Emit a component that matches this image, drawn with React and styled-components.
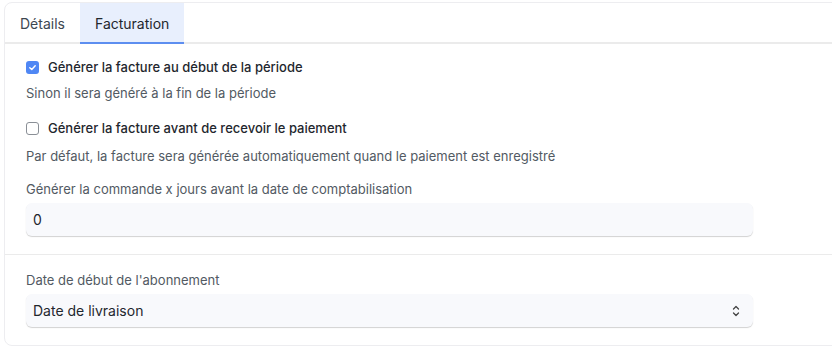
import React, { useState } from "react";
import styled, { createGlobalStyle } from "styled-components";

const GlobalStyle = createGlobalStyle`
  html, body {
    margin: 0;
    padding: 0;
    background: #ffffff;
    overflow: hidden;
  }
  body {
    font-family: Inter, "Noto Sans", sans-serif;
    color: #1f272e;
  }
`;

const Check = () => (
  <svg width="9" height="9" viewBox="0 0 10 10">
    <path d="M2 5.2 L4.2 7.2 L8 3" fill="none" stroke="#fff" strokeWidth="1.6" strokeLinecap="round" strokeLinejoin="round" />
  </svg>
);

const App = () => {
  const [active, setActive] = useState("facturation");
  const [startOfPeriod, setStartOfPeriod] = useState(true);
  const [beforePayment, setBeforePayment] = useState(false);

  return (
    <>
      <GlobalStyle />
      <Page>
        <Card>
          <TabBar>
            <Tab active={active === "details"} onClick={() => setActive("details")}>
              Détails
            </Tab>
            <Tab active={active === "facturation"} onClick={() => setActive("facturation")}>
              Facturation
            </Tab>
          </TabBar>

          <Section>
            <Column>
              <CheckRow>
                <CheckBox checked={startOfPeriod} onClick={() => setStartOfPeriod(!startOfPeriod)}>
                  {startOfPeriod && <Check />}
                </CheckBox>
                <CheckLabel>Générer la facture au début de la période</CheckLabel>
              </CheckRow>
              <Help>Sinon il sera généré à la fin de la période</Help>

              <CheckRow second>
                <CheckBox checked={beforePayment} onClick={() => setBeforePayment(!beforePayment)}>
                  {beforePayment && <Check />}
                </CheckBox>
                <CheckLabel>Générer la facture avant de recevoir le paiement</CheckLabel>
              </CheckRow>
              <Help wide>Par défaut, la facture sera générée automatiquement quand le paiement est enregistré</Help>

              <Field>
                <FieldLabel>Générer la commande x jours avant la date de comptabilisation</FieldLabel>
                <Input defaultValue="0" />
              </Field>
            </Column>
          </Section>

          <Section last>
            <Column>
              <Field top>
                <FieldLabel>Date de début de l'abonnement</FieldLabel>
                <SelectBox>
                  <span>Date de livraison</span>
                  <svg width="10" height="14" viewBox="0 0 10 14">
                    <path d="M2.5 5 L5 2.5 L7.5 5 M2.5 9 L5 11.5 L7.5 9" fill="none" stroke="#444" strokeWidth="1.3" strokeLinecap="round" strokeLinejoin="round" />
                  </svg>
                </SelectBox>
              </Field>
            </Column>
          </Section>
        </Card>
      </Page>
    </>
  );
};

export default App;

const Page = styled.div`
  padding: 2px 0 0 4px;
  width: 900px;
`;

const Card = styled.div`
  border: 1px solid #ededf0;
  border-radius: 8px;
  background: #fff;
  height: 344px;
  box-sizing: border-box;
`;

const TabBar = styled.div`
  display: flex;
  height: 39px;
  border-bottom: 2px solid #ebebeb;
`;

const Tab = styled.div`
  display: flex;
  align-items: center;
  padding: 0 15px;
  font-size: 14px;
  color: ${(p) => (p.active ? "#1f272e" : "#3d4751")};
  background: ${(p) => (p.active ? "#e8effd" : "transparent")};
  box-shadow: ${(p) => (p.active ? "inset 0 -2px 0 #5d8ef0" : "none")};
  margin-bottom: -2px;
  cursor: pointer;
  &:first-child {
    border-top-left-radius: 8px;
  }
`;

const Section = styled.div`
  padding: ${(p) => (p.last ? "17px 0 0 21px" : "15px 0 18px 21px")};
  border-bottom: ${(p) => (p.last ? "none" : "1px solid #ebebeb")};
`;

const Column = styled.div`
  width: 727px;
  display: flex;
  flex-direction: column;
`;

const CheckRow = styled.div`
  display: flex;
  align-items: center;
  gap: 9px;
  height: 16px;
  margin-top: ${(p) => (p.second ? "19px" : "0")};
`;

const CheckBox = styled.div`
  width: 13px;
  height: 13px;
  box-sizing: border-box;
  border-radius: 3px;
  display: flex;
  align-items: center;
  justify-content: center;
  background: ${(p) => (p.checked ? "#4f87f4" : "#fff")};
  border: ${(p) => (p.checked ? "none" : "1px solid #8a8f96")};
  cursor: pointer;
  flex-shrink: 0;
`;

const CheckLabel = styled.span`
  font-size: 13px;
  font-weight: 500;
  color: #1f272e;
`;

const Help = styled.div`
  font-size: 13px;
  color: #525a63;
  margin-top: ${(p) => (p.wide ? "12px" : "10px")};
  line-height: 16px;
`;

const Field = styled.div`
  display: flex;
  flex-direction: column;
  margin-top: ${(p) => (p.top ? "0" : "17px")};
`;

const FieldLabel = styled.label`
  font-size: 13px;
  color: #525a63;
  line-height: 16px;
  margin-bottom: 6px;
`;

const Input = styled.input`
  height: 33px;
  box-sizing: border-box;
  border: none;
  border-radius: 6px;
  background: #f8f9fc;
  box-shadow: 0 1px 1px rgba(0, 0, 0, 0.18);
  padding: 0 7px;
  font-family: Inter, "Noto Sans", sans-serif;
  font-size: 14px;
  color: #1f272e;
  outline: none;
`;

const SelectBox = styled.div`
  height: 33px;
  box-sizing: border-box;
  border-radius: 6px;
  background: #f8f9fc;
  box-shadow: 0 1px 1px rgba(0, 0, 0, 0.18);
  padding: 0 12px 0 7px;
  display: flex;
  align-items: center;
  justify-content: space-between;
  font-size: 14px;
  color: #1f272e;
`;
